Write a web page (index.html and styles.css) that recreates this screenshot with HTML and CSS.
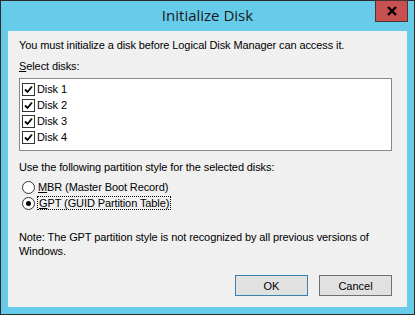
FILE: index.html
```html
<!DOCTYPE html>
<html>
<head>
    <meta charset="UTF-8">
    <title>Initialize Disk</title>
    <link rel="stylesheet" href="styles.css">
</head>
<body>
    <div class="window">
        <div class="titlebar">
            <div class="titlebar__text">Initialize Disk</div>
            <div class="close">
                <svg width="12" height="10" viewBox="0 0 12 10">
                    <path d="M2 1 L10 9 M10 1 L2 9" stroke="#000" stroke-width="2.4"/>
                </svg>
            </div>
        </div>
        <div class="content">
            <div class="intro">You must initialize a disk before Logical Disk Manager can access it.</div>
            <div class="label"><u>S</u>elect disks:</div>
            <div class="listbox">
                <div class="row"><span class="check"><svg width="9" height="9" viewBox="0 0 9 9"><path d="M1 4.5 L3.5 7 L8 1.5" stroke="#000" stroke-width="1.8" fill="none"/></svg></span>Disk 1</div>
                <div class="row"><span class="check"><svg width="9" height="9" viewBox="0 0 9 9"><path d="M1 4.5 L3.5 7 L8 1.5" stroke="#000" stroke-width="1.8" fill="none"/></svg></span>Disk 2</div>
                <div class="row"><span class="check"><svg width="9" height="9" viewBox="0 0 9 9"><path d="M1 4.5 L3.5 7 L8 1.5" stroke="#000" stroke-width="1.8" fill="none"/></svg></span>Disk 3</div>
                <div class="row"><span class="check"><svg width="9" height="9" viewBox="0 0 9 9"><path d="M1 4.5 L3.5 7 L8 1.5" stroke="#000" stroke-width="1.8" fill="none"/></svg></span>Disk 4</div>
            </div>
            <div class="label label--style">Use the following partition style for the selected disks:</div>
            <div class="radios">
                <div class="radio"><span class="radio__dot"></span><span><u>M</u>BR (Master Boot Record)</span></div>
                <div class="radio"><span class="radio__dot radio__dot--on"></span><span class="focus"><u>G</u>PT (GUID Partition Table)</span></div>
            </div>
            <div class="note">Note: The GPT partition style is not recognized by all previous versions of<br>Windows.</div>
            <div class="buttons">
                <button class="btn btn--default">OK</button>
                <button class="btn">Cancel</button>
            </div>
        </div>
    </div>
</body>
</html>
```

FILE: styles.css
```css
* {
    box-sizing: border-box;
}
body {
    margin: 0;
    font-family: 'Liberation Sans', Arial, sans-serif;
    font-size: 11px;
    letter-spacing: -0.1px;
    color: #000;
}
.window {
    width: 415px;
    height: 315px;
    background-color: #67cbea;
    border: 1px solid #2b2b2b;
    padding: 0 7px 7px 7px;
    display: flex;
    flex-direction: column;
}
.titlebar {
    height: 30px;
    position: relative;
    display: flex;
    justify-content: center;
}
.titlebar__text {
    font-family: 'Open Sans', sans-serif;
    font-size: 15px;
    letter-spacing: 0;
    color: #1a1a1a;
    line-height: 28px;
}
.close {
    position: absolute;
    right: -1px;
    top: -1px;
    width: 33px;
    height: 22px;
    background-color: #c75050;
    border: 1px solid #4a3434;
    display: flex;
    align-items: center;
    justify-content: center;
}
.content {
    flex: 1;
    background-color: #f0f0f0;
    padding: 7px 15px 0 11px;
    display: flex;
    flex-direction: column;
}
.intro {
    line-height: 15px;
}
.label {
    margin-top: 6px;
    line-height: 15px;
}
.listbox {
    margin-top: 4px;
    height: 73px;
    background-color: #fff;
    border: 1px solid #828790;
    padding: 2px 2px;
}
.row {
    height: 16px;
    display: flex;
    align-items: center;
}
.check {
    width: 13px;
    height: 13px;
    border: 1px solid #333;
    background: #fff;
    margin-right: 2px;
    display: flex;
    align-items: center;
    justify-content: center;
}
.label--style {
    margin-top: 9px;
}
.radios {
    margin-top: 4px;
}
.radio {
    height: 16px;
    display: flex;
    align-items: center;
}
.radio__dot {
    width: 13px;
    height: 13px;
    border: 1px solid #333;
    border-radius: 50%;
    background: #fff;
    margin: 0 3px 0 3px;
    display: flex;
    align-items: center;
    justify-content: center;
}
.radio__dot--on::after {
    content: "";
    width: 5px;
    height: 5px;
    border-radius: 50%;
    background: #000;
}
.focus {
    outline: 1px dotted #000;
    padding: 0 1px;
}
.note {
    margin-top: 19px;
    line-height: 14px;
}
.buttons {
    margin-top: auto;
    margin-bottom: 11px;
    display: flex;
    justify-content: flex-end;
    gap: 11px;
}
.btn {
    width: 73px;
    height: 21px;
    background-color: #e1e1e1;
    border: 1px solid #707070;
    font-family: 'Liberation Sans', Arial, sans-serif;
    font-size: 11px;
    color: #000;
    padding: 0;
}
.btn--default {
    border-color: #3c7fb1;
}
```
